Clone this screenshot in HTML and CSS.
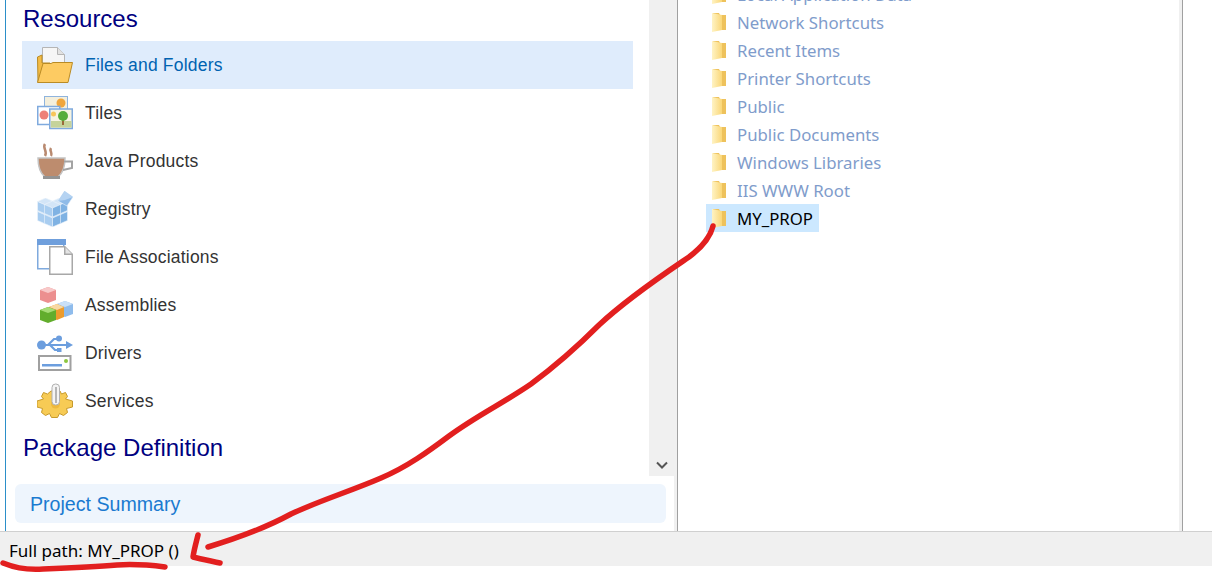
FILE: index.html
```html
<!DOCTYPE html>
<html lang="en">
<head>
    <meta charset="UTF-8">
    <title>Files and Folders</title>
    <link rel="stylesheet" href="styles.css">
</head>
<body>

<svg class="defs" width="0" height="0">
    <defs>
        <linearGradient id="pastaFace" x1="0" x2="1" y1="0" y2="0">
            <stop offset="0" stop-color="#fff3c4"/>
            <stop offset="1" stop-color="#fad778"/>
        </linearGradient>
        <symbol id="pasta" viewBox="0 0 14 21">
            <path d="M1 1h6l1 2h6v15H1z" fill="#eec25c"/>
            <path d="M0 1l10 2v15L0 20z" fill="url(#pastaFace)"/>
        </symbol>
        <symbol id="cubo" viewBox="0 0 16 16">
            <path d="M8 0l8 3.500L8 7 0 3.500z" fill="#d3e5f7" stroke="#eef5fc" stroke-width=".6"/>
            <path d="M0 3.500L8 7v9l-8-3.500z" fill="#a9cdf0" stroke="#eef5fc" stroke-width=".6"/>
            <path d="M16 3.500L8 7v9l8-3.500z" fill="#7fb2e3" stroke="#eef5fc" stroke-width=".6"/>
        </symbol>
    </defs>
</svg>

<div class="janela">
    <div class="paineis">
        <div class="painel-esq">
            <div class="lista-rolagem">
                <div class="conteudo-esq">
                    <h2 class="titulo">Resources</h2>

                    <div class="item ativo">
                        <svg class="icone" viewBox="0 0 36 36">
                            <path d="M5.500.5h15l7 7V20h-22z" fill="#f6f6f6" stroke="#b5b5b5"/>
                            <path d="M20.500.5v7h7" fill="#e2e2e2" stroke="#b5b5b5"/>
                            <path d="M.5 10L5 8v8h8l-12 19z" fill="#f3bb45" stroke="#b98b25"/>
                            <path d="M.5 35.500L6 16.500h8l2-1h19.500L31 35.500z" fill="#fdcb62" stroke="#b98b25"/>
                        </svg>
                        <span>Files and Folders</span>
                    </div>

                    <div class="item">
                        <svg class="icone" viewBox="0 0 36 36">
                            <rect x="7.500" y="1.500" width="23" height="18" fill="#f4efdc" stroke="#8fb4de"/>
                            <circle cx="24" cy="8" r="4.500" fill="#f0a63c"/>
                            <rect x=".75" y="11.500" width="22" height="18" fill="#fff" stroke="#7faade" stroke-width="1.500"/>
                            <circle cx="7" cy="20" r="4.500" fill="#ee8078"/>
                            <circle cx="15" cy="17" r="2.500" fill="#f7c65a"/>
                            <rect x="12.750" y="14" width="22.500" height="19.500" fill="#f6f4e2" stroke="#7faade" stroke-width="1.500"/>
                            <rect x="14" y="26" width="20.500" height="6.500" fill="#c5d39a"/>
                            <rect x="25" y="24" width="2" height="6" fill="#9a6b3a"/>
                            <circle cx="26" cy="21" r="5" fill="#57ad3a"/>
                            <circle cx="16.500" cy="19" r="2.500" fill="#f7c65a"/>
                        </svg>
                        <span>Tiles</span>
                    </div>

                    <div class="item">
                        <svg class="icone" viewBox="0 0 36 36">
                            <path d="M8 1c-3 4 3 7 0 12M14 5c-2 3 2 5 0 8" fill="none" stroke="#b98a70" stroke-width="2.500"/>
                            <path d="M1 15h27c0 9-2 15-7 19H8C3 30 1 24 1 15z" fill="#bd8c6e" stroke="#c4c4c4" stroke-width="1.500"/>
                            <path d="M27 18.500h8V25l-9 2" fill="none" stroke="#a3a3a3" stroke-width="2"/>
                            <path d="M6 34.500h17" stroke="#949494" stroke-width="3"/>
                        </svg>
                        <span>Java Products</span>
                    </div>

                    <div class="item">
                        <svg class="icone" viewBox="0 0 36 36">
                            <use href="#cubo" x="0" y="17" width="17" height="16"/>
                            <use href="#cubo" x="14" y="17" width="17" height="16"/>
                            <use href="#cubo" x="7" y="20" width="17" height="16"/>
                            <use href="#cubo" x="0" y="7" width="17" height="16"/>
                            <use href="#cubo" x="14" y="7" width="17" height="16"/>
                            <use href="#cubo" x="7" y="10" width="17" height="16"/>
                            <path d="M27.500 0L36 6l-6 9-9-5z" fill="#8fbbe8" stroke="#eef5fc" stroke-width=".6"/>
                            <path d="M27.500 0L36 6l-8 3-7 1z" fill="#b5d3f2"/>
                        </svg>
                        <span>Registry</span>
                    </div>

                    <div class="item">
                        <svg class="icone" viewBox="0 0 36 36">
                            <rect x=".75" y=".75" width="26" height="29" fill="#fff" stroke="#7faade" stroke-width="1.500"/>
                            <rect x="0" y="0" width="29" height="6" fill="#6f9fdc"/>
                            <path d="M12.750 7.750h15l7.500 7.500v20h-22.500z" fill="#fff" stroke="#a8a8a8" stroke-width="1.500"/>
                            <path d="M27.750 7.750v7.500h7.500" fill="#e4e4e4" stroke="#a8a8a8" stroke-width="1.500"/>
                        </svg>
                        <span>File Associations</span>
                    </div>

                    <div class="item">
                        <svg class="icone" viewBox="0 0 36 36">
                            <path d="M11 0l8 3v10l-8 3-8-3V3z" fill="#ec8f8f"/>
                            <path d="M11 0l8 3-8 3-8-3z" fill="#f8c9c9"/>
                            <path d="M28 14l8 3v10l-8 3-8-3V17z" fill="#8fbcec"/>
                            <path d="M28 14l8 3-8 3-8-3z" fill="#c9e0f8"/>
                            <path d="M20 17l7 3v10l-7 3-8-3V20z" fill="#ec9c2e"/>
                            <path d="M20 17l7 3-7 3-8-3z" fill="#f8d9a4"/>
                            <path d="M11 20l8 3v10l-8 3-8-3V23z" fill="#62ad2c"/>
                            <path d="M11 20l8 3-8 3-8-3z" fill="#a6dc76"/>
                        </svg>
                        <span>Assemblies</span>
                    </div>

                    <div class="item">
                        <svg class="icone" viewBox="0 0 36 36">
                            <circle cx="4.500" cy="10" r="4.500" fill="#6c9ede"/>
                            <path d="M4 10h28M11 10l6-6h4M13 10l5 5h3" fill="none" stroke="#6c9ede" stroke-width="2.200"/>
                            <path d="M29 6l7 4-7 4z" fill="#6c9ede"/>
                            <circle cx="22" cy="3.500" r="3" fill="#6c9ede"/>
                            <rect x="20" y="13" width="4.500" height="4" fill="#6c9ede"/>
                            <rect x="2" y="21" width="31.500" height="14" fill="#fff" stroke="#a0a0a0" stroke-width="2"/>
                            <rect x="5" y="29" width="20" height="2.500" fill="#6c9ede"/>
                            <circle cx="29" cy="26" r="2" fill="#8cc63f"/>
                        </svg>
                        <span>Drivers</span>
                    </div>

                    <div class="item">
                        <svg class="icone" viewBox="0 0 36 36">
                            <path d="M14 8h9l1.500 3 4-1.500 2 4-2 2.500 7 2v6l-6 1.500 1 4-4 3-4-2-2 4h-6l-2-4-4 2-4-3 1-4L0 24v-6l6.500-2-2-2.500 2-4 4 1.500z" fill="#f7cb55" stroke="#c79a2c"/>
                            <circle cx="18.500" cy="21" r="4.500" fill="#eeb93e"/>
                            <rect x="15" y="1" width="7.500" height="21" rx="3.500" fill="#f4f4f4" stroke="#b0b0b0"/>
                            <rect x="18" y="4" width="2" height="16" fill="#b5b5b5"/>
                        </svg>
                        <span>Services</span>
                    </div>

                    <h2 class="titulo titulo-pacote">Package Definition</h2>
                </div>
                <div class="barra-rolagem">
                    <svg class="seta" width="12" height="8" viewBox="0 0 12 8">
                        <path d="M1 1.500l5 5 5-5" fill="none" stroke="#555" stroke-width="2"/>
                    </svg>
                </div>
            </div>
            <div class="resumo-wrap">
                <div class="resumo">Project Summary</div>
            </div>
        </div>

        <div class="divisor"></div>

        <div class="painel-dir">
            <div class="pasta"><svg class="icone-pasta"><use href="#pasta"/></svg><span>Local Application Data</span></div>
            <div class="pasta"><svg class="icone-pasta"><use href="#pasta"/></svg><span>Network Shortcuts</span></div>
            <div class="pasta"><svg class="icone-pasta"><use href="#pasta"/></svg><span>Recent Items</span></div>
            <div class="pasta"><svg class="icone-pasta"><use href="#pasta"/></svg><span>Printer Shortcuts</span></div>
            <div class="pasta"><svg class="icone-pasta"><use href="#pasta"/></svg><span>Public</span></div>
            <div class="pasta"><svg class="icone-pasta"><use href="#pasta"/></svg><span>Public Documents</span></div>
            <div class="pasta"><svg class="icone-pasta"><use href="#pasta"/></svg><span>Windows Libraries</span></div>
            <div class="pasta"><svg class="icone-pasta"><use href="#pasta"/></svg><span>IIS WWW Root</span></div>
            <div class="pasta selecionada"><svg class="icone-pasta"><use href="#pasta"/></svg><span>MY_PROP</span></div>
        </div>

        <div class="margem-dir"></div>
    </div>

    <div class="status">Full path: MY_PROP ()</div>
</div>

<!-- anotacao em vermelho por cima da tela -->
<svg class="anotacao" width="1212" height="573" viewBox="0 0 1212 573">
    <g fill="none" stroke="#e21f1f" stroke-width="5.500" stroke-linecap="round" stroke-linejoin="round">
        <path d="M713 226c-3 12-12 22-24 31-22 15-60 40-90 68-22 22-45 42-68 59-26 18-55 32-82 52-20 15-42 31-68 42-30 13-60 22-90 36-22 12-50 23-83 33"/>
        <path d="M198 535c-2 8-4 15-5 22 8 2 18 4 27 6"/>
        <path d="M3 563c10 4 20 7 40 6 25-1 50-2 74-4 15-1 32 0 48 2"/>
    </g>
</svg>

</body>
</html>
```

FILE: styles.css
```css
html, body { margin: 0; padding: 0; height: 100%; background: #fff; overflow: hidden; }
body { font-family: "Liberation Sans", Arial, sans-serif; position: relative; }
.defs { display: block; height: 0; }
.janela { display: flex; flex-direction: column; height: 566px; }
.paineis { display: flex; height: 531px; }
.painel-esq { width: 668px; margin-left: 5px; border-left: 1px solid #2b8fc9; display: flex; flex-direction: column; }
.lista-rolagem { display: flex; height: 476px; }
.conteudo-esq { width: 643px; padding-left: 16px; box-sizing: border-box; }
.titulo { margin: 0; height: 41px; padding-left: 1px; line-height: 38px; font-size: 24px; font-weight: normal; color: #000080; }
.titulo-pacote { height: 46px; line-height: 46px; }
.item { display: flex; align-items: center; height: 48px; width: 611px; color: #333; font-size: 17.5px; letter-spacing: .2px; }
.item span { padding-top: 1px; }
.item .icone { width: 36px; height: 36px; margin-left: 15px; margin-right: 12px; flex-shrink: 0; }
.item.ativo { background: #dfecfc; color: #0063b1; }
.barra-rolagem { width: 25px; background: #f0f0f0; display: flex; align-items: flex-end; justify-content: center; padding-bottom: 7px; box-sizing: border-box; }
.resumo-wrap { padding: 8px 8px 0 9px; }
.resumo { height: 39px; line-height: 40px; padding-left: 15px; background: #eef5fd; border-radius: 6px; color: #1a7ad0; font-size: 19.6px; }
.divisor { width: 3px; background: #f0f0f0; border-right: 1px solid #a0a0a0; margin-left: 0; }
.painel-dir { width: 504px; overflow: hidden; padding-left: 28px; box-sizing: border-box; font-family: "Noto Sans", sans-serif; font-size: 16.8px; color: #7f9ccb; }
.pasta { display: flex; align-items: center; height: 28px; width: fit-content; padding-right: 6px; }
.pasta:first-child { margin-top: -20px; }
.pasta span { margin-left: 11px; }
.icone-pasta { width: 14px; height: 21px; margin-left: 6px; flex-shrink: 0; }
.pasta.selecionada { background: #cce8ff; color: #000; }
.margem-dir { width: 4px; background: #f0f0f0; border-right: 1px solid #a0a0a0; box-sizing: border-box; margin-left: -3px; }
.status { height: 35px; line-height: 37px; background: #f0f0f0; border-top: 1px solid #d0d0d0; box-sizing: border-box; padding-left: 9px; font-family: "Noto Sans", sans-serif; font-size: 17px; color: #000; }
.anotacao { position: absolute; left: 0; top: 0; }
```
